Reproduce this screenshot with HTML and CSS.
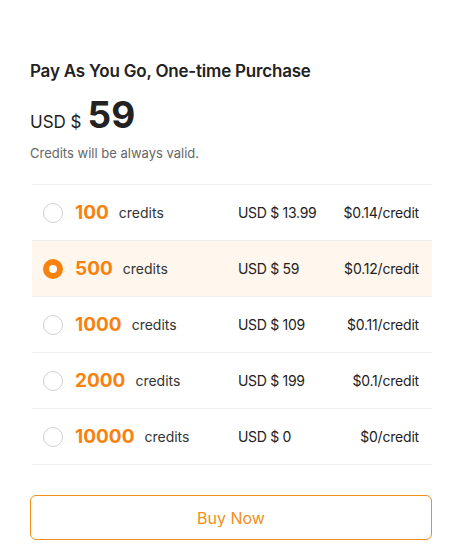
FILE: index.html
```html
<!DOCTYPE html>
<html lang="en">
<head>
<meta charset="utf-8">
<title>Pay As You Go</title>
<link rel="stylesheet" href="styles.css">
</head>
<body>
<div class="card">
  <h2 class="title">Pay As You Go, One-time Purchase</h2>
  <div class="price"><span class="cur">USD $</span><span class="amount">59</span></div>
  <p class="note">Credits will be always valid.</p>
  <ul class="plans">
    <li class="plan"><span class="radio"></span><span class="num">100</span><span class="unit">credits</span><span class="cost">USD $ 13.99</span><span class="per">$0.14/credit</span></li>
    <li class="plan selected"><span class="radio"></span><span class="num">500</span><span class="unit">credits</span><span class="cost">USD $ 59</span><span class="per">$0.12/credit</span></li>
    <li class="plan"><span class="radio"></span><span class="num">1000</span><span class="unit">credits</span><span class="cost">USD $ 109</span><span class="per">$0.11/credit</span></li>
    <li class="plan"><span class="radio"></span><span class="num">2000</span><span class="unit">credits</span><span class="cost">USD $ 199</span><span class="per">$0.1/credit</span></li>
    <li class="plan"><span class="radio"></span><span class="num">10000</span><span class="unit">credits</span><span class="cost">USD $ 0</span><span class="per">$0/credit</span></li>
  </ul>
  <button class="buy">Buy Now</button>
</div>
</body>
</html>
```
FILE: styles.css
```css
* { box-sizing: border-box; }
body {
  margin: 0;
  background: #fff;
  font-family: Inter, "Noto Sans", sans-serif;
  color: #222;
}
.card {
  padding: 59px 28px 0 30px;
}
.title {
  margin: 0;
  font-size: 17px;
  line-height: 24px;
  font-weight: 600;
  color: #222;
  letter-spacing: -0.2px;
}
.price {
  display: flex;
  align-items: baseline;
  gap: 6px;
  margin-top: 10px;
  height: 44px;
}
.cur {
  font-size: 17px;
  color: #222;
}
.amount {
  font-size: 37px;
  font-weight: 700;
  color: #222;
  line-height: 44px;
}
.note {
  margin: 7px 0 0;
  font-size: 13px;
  line-height: 18px;
  color: #666;
}
.plans {
  list-style: none;
  margin: 22px 0 0 2px;
  padding: 0;
  border-top: 1px solid #eee;
}
.plan {
  display: grid;
  grid-template-columns: 20px auto auto 1fr 105px 76px;
  align-items: center;
  height: 56px;
  padding: 0 13px 0 11px;
  border-bottom: 1px solid #eee;
}
.plan.selected { background: #fff6ee; }
.radio {
  width: 20px;
  height: 20px;
  border-radius: 50%;
  border: 1px solid #d0d0d0;
  background: #fff;
}
.selected .radio {
  border: 6px solid #f7820f;
}
.num {
  margin-left: 12px;
  font-size: 19px;
  font-weight: 700;
  color: #f7820f;
}
.unit {
  margin-left: 10px;
  font-size: 14px;
  color: #333;
}
.cost {
  grid-column: 5;
  font-size: 14px;
  letter-spacing: -0.3px;
  color: #222;
}
.per {
  grid-column: 6;
  text-align: right;
  white-space: nowrap;
  font-size: 14px;
  letter-spacing: -0.2px;
  color: #222;
}
.buy {
  display: block;
  width: 402px;
  height: 45px;
  margin-top: 30px;
  background: #fff;
  border: 1px solid #f0901a;
  border-radius: 6px;
  color: #f0901a;
  font-family: inherit;
  font-size: 16px;
  cursor: pointer;
}
```
